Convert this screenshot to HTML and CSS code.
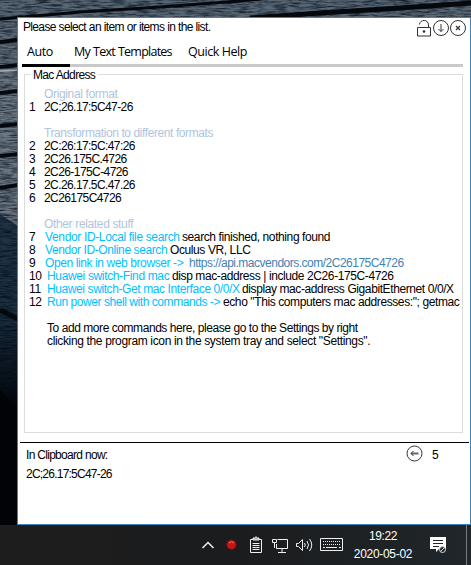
FILE: index.html
```html
<!DOCTYPE html>
<html lang="en">
<head>
<meta charset="utf-8">
<title>Clipboard items</title>
<link rel="stylesheet" href="styles.css">
</head>
<body>
<svg class="wallpaper" width="471" height="565" viewBox="0 0 471 565" aria-hidden="true">
  <defs>
    <linearGradient id="wood" x1="0" y1="0" x2="0" y2="1"><stop offset="0" stop-color="#566573"/><stop offset=".4" stop-color="#6c7984"/><stop offset="1" stop-color="#697581"/></linearGradient>
    <linearGradient id="dark" x1="0" y1="0" x2="0" y2="1"><stop offset="0" stop-color="#203445"/><stop offset=".5" stop-color="#1a2f40"/><stop offset="1" stop-color="#020408"/></linearGradient>
    <filter id="grain" x="0" y="0" width="1" height="1" color-interpolation-filters="sRGB"><feTurbulence type="fractalNoise" baseFrequency=".08 .6" numOctaves="3" seed="4"/><feColorMatrix values="0 0 0 0 0  0 0 0 0 .03  0 0 0 0 .08  1.6 0 0 0 -.58"/></filter>
  </defs>
  <rect width="471" height="230" fill="url(#wood)"/>
  <path d="M0 214 18 226V410H0Z" fill="url(#dark)"/>
  <rect width="471" height="410" filter="url(#grain)"/>
  <g fill="none" stroke="#05090e">
    <path d="M0 19 80 12 160 7 240 1 262-1" stroke-width="3"/>
    <path d="M250 18 320 13 400 8 471 3" stroke-width="5"/>
    <path d="M0 42 18 40M0 67 18 65M0 93 18 91M0 126 18 124M0 156 18 154M0 188 18 185" stroke-width="4"/>
    <path d="M0 310 18 319" stroke-width="5"/>
  </g>
  <path d="M0 71 18 70" stroke="#a2adb2" stroke-width="1.5"/>
  <path d="M0 390 18 408V525H0Z" fill="#020307"/>
</svg>

<main class="window">
  <header class="titlebar">
    <span class="prompt">Please select an item or items in the list.</span>
    <svg class="tools" width="50" height="18" viewBox="0 0 50 18" fill="none" stroke="#333" stroke-width="1">
      <path d="M.5 7.500h13v8.500H.5zM2.500 4.500C3-1 11.500-1 11.500 5V7.500"/><circle cx="7" cy="11.500" r="1" fill="#222" stroke-width=".7"/>
      <circle cx="24" cy="8" r="7.500"/><path d="M24 4V11.500M21.500 9 24 11.500 26.500 9"/>
      <circle cx="41" cy="8" r="7.500"/><path d="M39 6 43 10M43 6 39 10" stroke-width="1.200"/>
    </svg>
  </header>
  <nav class="tabs">
    <span class="tab-auto">Auto</span><span class="tab-templates">My Text Templates</span><span class="tab-help">Quick Help</span>
  </nav>
  <fieldset class="group">
    <legend>Mac Address</legend>
    <div class="row head"><span class="num"></span><span>Original format</span></div>
    <div class="row value"><span class="num">1</span><span>2C;26.17:5C47-26</span></div>
    <div class="row"></div>
    <div class="row head"><span class="num"></span><span class="h2">Transformation to different formats</span></div>
    <div class="row value"><span class="num">2</span><span>2C:26:17:5C:47:26</span></div>
    <div class="row value"><span class="num">3</span><span>2C26.175C.4726</span></div>
    <div class="row value"><span class="num">4</span><span>2C26-175C-4726</span></div>
    <div class="row value"><span class="num">5</span><span>2C.26.17.5C.47.26</span></div>
    <div class="row value"><span class="num">6</span><span>2C26175C4726</span></div>
    <div class="row"></div>
    <div class="row head"><span class="num"></span><span>Other related stuff</span></div>
    <div class="row"><span class="num n7">7</span><span class="cmd c7">Vendor ID-Local file search</span><span class="detail">search finished, nothing found</span></div>
    <div class="row"><span class="num n7">8</span><span class="cmd c8">Vendor ID-Online search</span><span class="detail">Oculus VR, LLC</span></div>
    <div class="row"><span class="num n7">9</span><span class="cmd c9">Open link in web browser -&gt;</span><span class="link">https://api.macvendors.com/2C26175C4726</span></div>
    <div class="row"><span class="num n10">10</span><span class="cmd c10">Huawei switch-Find mac</span><span class="detail">disp mac-address | include 2C26-175C-4726</span></div>
    <div class="row"><span class="num n10">11</span><span class="cmd c11">Huawei switch-Get mac Interface 0/0/X</span><span class="detail">display mac-address GigabitEthernet 0/0/X</span></div>
    <div class="row"><span class="num n10">12</span><span class="cmd c12">Run power shell with commands -&gt;</span><span class="detail">echo "This computers mac addresses:"; getmac</span></div>
    <div class="row"></div>
    <div class="row"><span class="num n10"></span><span class="t1">To add more commands here, please go to the Settings by right</span></div>
    <div class="row"><span class="num n10"></span><span>clicking the program icon in the system tray and select "Settings".</span></div>
  </fieldset>
  <footer class="clipboard">
    <div class="clip-head"><span class="clip-label">In Clipboard now:</span>
      <svg width="17" height="17" viewBox="0 0 17 17" fill="none" stroke="#333"><circle cx="8.500" cy="8.500" r="7.500"/><path d="M5 8.500H12.500" stroke="#666" stroke-width="2"/><path d="M7.500 6 5 8.500 7.500 11" /></svg>
      <span class="count">5</span></div>
    <div class="clip-value">2C;26.17:5C47-26</div>
  </footer>
</main>

<div class="taskbar">
  <svg class="tray" width="145" height="40" viewBox="0 0 145 40" fill="none" stroke="#f0f0f0">
    <path d="M2.500 23 8 17.500 13.500 23" stroke-width="1.500"/>
    <circle cx="31.500" cy="19.700" r="4.800" fill="#c51616" stroke="#671111"/><path d="M29 18Q31.500 15 34 18" stroke="#ef7770"/>
    <path d="M50.500 14.500h11v13h-11zM52.500 18.500h7M52.500 20.500h7M52.500 22.500h7M52.500 24.500h7"/><path d="M53 15V13h1.500Q56 10.500 57.500 13H59v2z" fill="#aaa"/>
    <path d="M77.500 14.500H87.500V23.500H76.500V19M82 24v3M78 27.500h8"/><path d="M72.500 14.500h4v3h-4zM74.500 18v5"/>
    <path d="M96.500 18.500h2l4-4v11l-4-4h-2zM104.500 18Q106 20 104.500 22M107 16Q110 20 107 24M109.500 14Q114 20 109.500 26"/>
    <path d="M120.500 13.500h22v12h-22z"/><path d="M123 16.500h18M123 19.500h18" stroke-dasharray="1 1"/><path d="M123 22.500h2M126 22.500h11M139 22.500h2"/>
  </svg>
  <div class="clock"><span class="time">19:22</span><span class="date">2020-05-02</span></div>
  <svg class="notify" width="20" height="20" viewBox="0 0 20 20"><path d="M1 2h16v12H10l-3 3v-3H1z" fill="#fff"/><path d="M4 5.500h10M4 8.500h10M4 11.500h6" stroke="#20262a"/><circle cx="13.500" cy="14.500" r="3" fill="#20262a" stroke="#ddd"/><path d="M11.500 16.500l4-4" stroke="#ddd"/></svg>
  <span class="peek"></span>
</div>
</body>
</html>
```

FILE: styles.css
```css
* { box-sizing: border-box; }
body { margin: 0; width: 471px; height: 565px; overflow: hidden; background: #020307; font: 12px/13px "Liberation Sans", Arial, sans-serif; color: #000; display: flex; flex-direction: column; }
.wallpaper { position: absolute; left: 0; top: 0; z-index: -1; }
.window { margin: 17px 0 0 17px; width: 454px; height: 508px; flex: none; background: #fff; border: 1px solid #3c84bd; display: flex; flex-direction: column; }
.titlebar { height: 23px; padding: 2px 3px 0 5px; display: flex; justify-content: space-between; white-space: nowrap; }
.prompt { line-height: 14px; letter-spacing: -.66px; word-spacing: .2px; }
.tabs { height: 26px; margin: 0 7px 0 4px; border-bottom: 3px solid #cacaca; display: flex; font: 12.5px/22px "Open Sans", "Noto Sans", sans-serif; letter-spacing: -.45px; white-space: nowrap; }
.tab-auto { width: 48px; height: 26px; padding-left: 5px; border-bottom: 3px solid #000; }
.tab-templates { padding-left: 4px; width: 114px; letter-spacing: -.75px; word-spacing: .5px; }
.tab-help { padding-left: 4px; }
.group { margin: 1px 7px 0 6px; height: 365px; min-width: 0; padding: 7px 0 0 4px; border: 1px solid #dcdcdc; }
.group legend { margin-left: 1px; padding: 2px 3px 0; line-height: 11px; white-space: nowrap; letter-spacing: -.65px; }
.row { height: 13px; display: flex; white-space: nowrap; letter-spacing: -.35px; }
.row > span { flex: none; }
.value { letter-spacing: -.58px; }
.num { width: 15px; }
.n7 { width: 16px; }
.n10 { width: 18px; }
.head { color: #b0c4de; }
.h2 { letter-spacing: -.41px; }
.cmd { color: #00bfff; }
.link { color: #4682b4; letter-spacing: -.5px; }
.detail { letter-spacing: -.4px; }
.t1 { letter-spacing: -.44px; }
.c7 { width: 137px; }
.c8 { width: 125px; letter-spacing: -.4px; }
.c9 { width: 144px; letter-spacing: -.4px; }
.c10 { width: 125px; }
.c11 { width: 195px; letter-spacing: -.4px; }
.c12 { width: 176px; letter-spacing: -.44px; }
.clipboard { margin: 9px 1px 0 2px; border-top: 1px solid #000; padding-left: 6px; }
.clip-head { height: 24px; display: flex; padding-top: 2px; }
.clip-label { width: 380px; line-height: 20px; letter-spacing: -.7px; }
.count { margin-left: 9px; line-height: 20px; }
.clip-value { line-height: 15px; letter-spacing: -.77px; }
.taskbar { height: 40px; flex: none; background: linear-gradient(90deg, #1d1d1d, #1b1c1e 50%, #20262a); display: flex; color: #fff; }
.tray { margin-left: 200px; flex: none; }
.clock { width: 76px; display: flex; flex-direction: column; align-items: center; line-height: 18px; padding-top: 2px; }
.time { letter-spacing: -.4px; }
.date { letter-spacing: -.3px; white-space: nowrap; }
.notify { margin: 10px 0 0 8px; }
.peek { margin-left: 17px; width: 1px; background: #777c80; }
```
